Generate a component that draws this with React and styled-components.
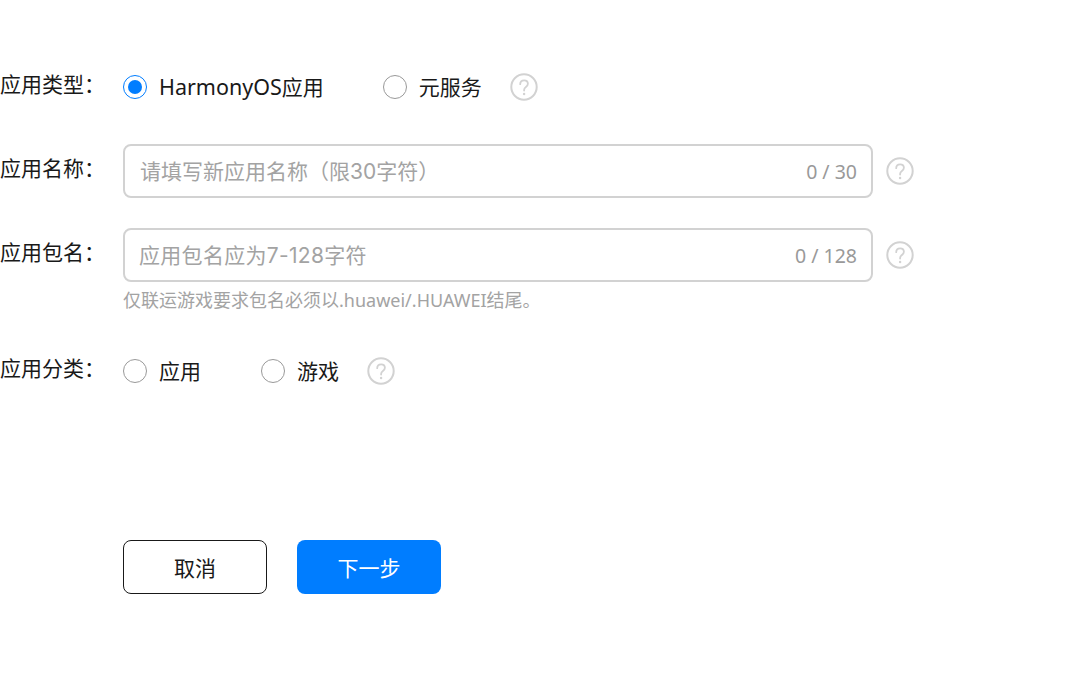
import styled, { createGlobalStyle } from 'styled-components';

const GlobalStyle = createGlobalStyle`
  html, body {
    margin: 0;
    padding: 0;
    background: #fff;
    font-family: "Noto Sans", "Noto Sans CJK SC", sans-serif;
    text-spacing-trim: space-all;
  }
`;

function HelpIcon() {
  return (
    <HelpSvg viewBox="0 0 28 28" fill="none">
      <circle cx="14" cy="14" r="12.7" stroke="#d2d2d2" strokeWidth="2" />
      <path
        d="M10.2 11.2c0-2.3 1.6-3.8 3.9-3.8 2.2 0 3.8 1.4 3.8 3.4 0 1.5-.8 2.3-2 3.2-1.2.9-1.8 1.5-1.8 3v.6"
        stroke="#d2d2d2"
        strokeWidth="1.8"
        strokeLinecap="round"
      />
      <circle cx="14.1" cy="21" r="1.2" fill="#d2d2d2" />
    </HelpSvg>
  );
}

function Radio({ children, checked, gap }) {
  return (
    <RadioItem $gap={gap}>
      <RadioDot $checked={checked} />
      <RadioText>{children}</RadioText>
    </RadioItem>
  );
}

function TextField({ placeholder, count, indent, spacing = 0 }) {
  return (
    <FieldWrap>
      <Field>
        <FieldInput placeholder={placeholder} $indent={indent} $spacing={spacing} readOnly />
        <Counter>{count}</Counter>
      </Field>
      <HelpIcon />
    </FieldWrap>
  );
}

export default function App() {
  return (
    <Page>
      <GlobalStyle />
      <Row>
        <Label>应用类型：</Label>
        <Radio checked gap={59}>
          <Latin>HarmonyOS</Latin>应用
        </Radio>
        <Radio gap={28}>元服务</Radio>
        <HelpIcon />
      </Row>
      <Row>
        <Label>应用名称：</Label>
        <TextField placeholder="请填写新应用名称（限30字符）" count="0 / 30" indent={16} />
      </Row>
      <Row>
        <Label>应用包名：</Label>
        <TextField placeholder="应用包名应为7-128字符" count="0 / 128" indent={15} spacing={0.3} />
      </Row>
      <Hint>仅联运游戏要求包名必须以.huawei/.HUAWEI结尾。</Hint>
      <Row>
        <Label>应用分类：</Label>
        <Radio gap={60}>应用</Radio>
        <Radio gap={28}>游戏</Radio>
        <HelpIcon />
      </Row>
      <Actions>
        <CancelBtn>取消</CancelBtn>
        <NextBtn>下一步</NextBtn>
      </Actions>
    </Page>
  );
}

const Page = styled.div`
  width: 1068px;
  height: 681px;
  overflow: hidden;
  padding-top: 60px;
  box-sizing: border-box;
  display: flex;
  flex-direction: column;
  gap: 30px;
`;

const Row = styled.div`
  display: flex;
  align-items: center;
  height: 54px;
`;

const Label = styled.div`
  width: 123px;
  flex-shrink: 0;
  font-size: 21px;
  line-height: 26px;
  color: #191919;
  margin-bottom: 6px;
`;

const RadioItem = styled.div`
  display: flex;
  align-items: center;
  margin-right: ${(props) => props.$gap}px;
`;

const RadioDot = styled.span`
  width: 24px;
  height: 24px;
  box-sizing: border-box;
  border-radius: 50%;
  border: 1px solid ${(props) => (props.$checked ? '#007dff' : '#999')};
  display: flex;
  align-items: center;
  justify-content: center;
  margin-right: 12px;
  &::after {
    content: '';
    display: ${(props) => (props.$checked ? 'block' : 'none')};
    width: 14px;
    height: 14px;
    border-radius: 50%;
    background: #007dff;
  }
`;

const RadioText = styled.span`
  font-size: 21px;
  line-height: 28px;
  color: #191919;
`;

const Latin = styled.span`
  font-size: 21.5px;
`;

const HelpSvg = styled.svg`
  width: 28px;
  height: 28px;
  flex-shrink: 0;
`;

const FieldWrap = styled.div`
  display: flex;
  align-items: center;
  gap: 13px;
`;

const Field = styled.div`
  width: 750px;
  height: 54px;
  box-sizing: border-box;
  border: 2px solid #d2d2d2;
  border-radius: 8px;
  display: flex;
  align-items: center;
  padding-right: 14px;
`;

const FieldInput = styled.input`
  flex: 1;
  min-width: 0;
  border: 0;
  outline: 0;
  background: transparent;
  padding: 0 0 0 ${(props) => props.$indent - 1}px;
  font-family: Inter, "Noto Sans CJK SC", sans-serif;
  font-size: 21px;
  letter-spacing: ${(props) => props.$spacing}px;
  color: #191919;
  &::placeholder {
    color: #a3a3a3;
    opacity: 1;
  }
`;

const Counter = styled.span`
  font-size: 19.5px;
  color: #999;
`;

const Hint = styled.div`
  height: 32px;
  margin-top: -30px;
  padding-left: 123px;
  padding-top: 5px;
  box-sizing: border-box;
  font-size: 18px;
  line-height: 26px;
  color: #a3a3a3;
`;

const Actions = styled.div`
  display: flex;
  gap: 30px;
  margin-top: 112px;
  padding-left: 123px;
`;

const CancelBtn = styled.button`
  width: 144px;
  height: 54px;
  box-sizing: border-box;
  background: #fff;
  border: 1px solid #191919;
  border-radius: 8px;
  font-family: inherit;
  font-size: 21px;
  color: #191919;
  padding: 0;
`;

const NextBtn = styled(CancelBtn)`
  background: #007dff;
  border: 0;
  color: #fff;
`;
